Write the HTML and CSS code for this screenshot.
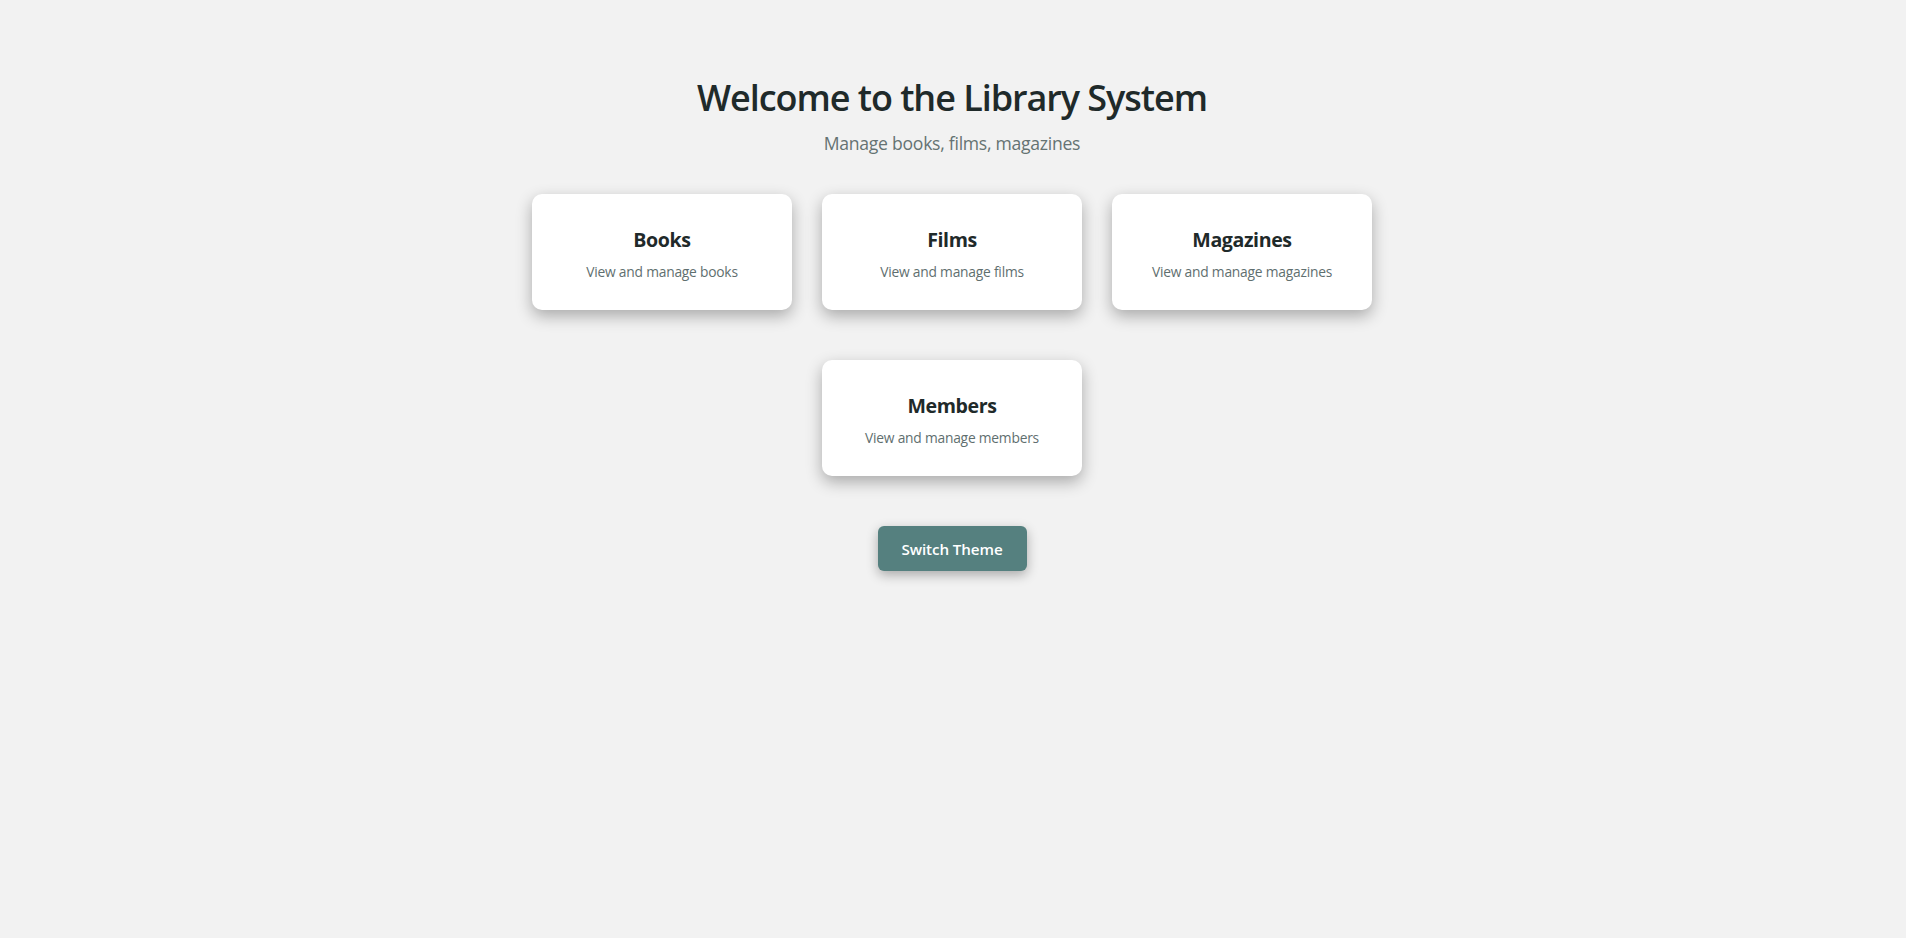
FILE: index.html
```html
<!DOCTYPE html>
<html lang="en">
<head>
<meta charset="utf-8">
<title>Library System</title>
<link rel="stylesheet" href="styles.css">
</head>
<body>
<main class="page">
  <h1 class="title">Welcome to the Library System</h1>
  <p class="subtitle">Manage books, films, magazines</p>
  <div class="cards">
    <a class="card"><h2 class="card-title">Books</h2><p class="card-text">View and manage books</p></a>
    <a class="card"><h2 class="card-title">Films</h2><p class="card-text">View and manage films</p></a>
    <a class="card"><h2 class="card-title">Magazines</h2><p class="card-text">View and manage magazines</p></a>
  </div>
  <div class="cards">
    <a class="card"><h2 class="card-title">Members</h2><p class="card-text">View and manage members</p></a>
  </div>
  <button class="theme-button" type="button">Switch Theme</button>
</main>
</body>
</html>
```
FILE: styles.css
```css
* { box-sizing: border-box; }
body {
  margin: 0;
  background: #f2f2f2;
  color: #1f2a2a;
  font-family: "Segoe UI", "Open Sans", "Noto Sans", sans-serif;
}
.page {
  display: flex;
  flex-direction: column;
  align-items: center;
  min-height: 100vh;
  padding: 72px 2px 0 0;
}
.title {
  margin: 0;
  font-size: 36px;
  line-height: 52px;
  font-weight: 600;
  letter-spacing: -1.05px;
  white-space: nowrap;
}
.subtitle {
  margin: 6px 0 39px;
  font-size: 17.6px;
  line-height: 26px;
  height: 25px;
  letter-spacing: -0.27px;
  color: #657373;
}
.cards {
  display: flex;
  justify-content: center;
  gap: 30px;
  margin-bottom: 50px;
}
.card {
  width: 260px;
  height: 116px;
  padding: 32px 20px;
  background: #fff;
  border-radius: 10px;
  text-align: center;
  box-shadow: 0 6px 16px rgba(0, 0, 0, 0.3);
}
.card-title {
  margin: 0 0 8px;
  font-size: 19.6px;
  line-height: 28px;
  font-weight: 700;
  letter-spacing: -0.4px;
}
.card-text {
  margin: 0;
  font-size: 13.8px;
  line-height: 20px;
  letter-spacing: -0.22px;
  color: #5f6f6f;
}
.theme-button {
  width: 149px;
  height: 45px;
  padding: 0;
  border: 0;
  border-radius: 6px;
  background: #55807f;
  color: #fff;
  font-family: inherit;
  font-size: 15.2px;
  font-weight: 600;
  letter-spacing: -0.1px;
  box-shadow: 0 4px 12px rgba(0, 0, 0, 0.3);
}
```
